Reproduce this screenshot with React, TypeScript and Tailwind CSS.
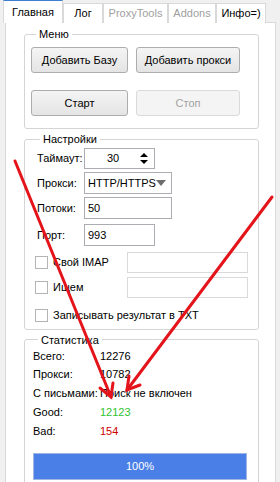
import React from 'react';

const btn =
  'flex items-center justify-center h-[26px] rounded-[3px] border border-[#adadad] bg-gradient-to-b from-[#f4f4f4] to-[#e4e4e4]';
const input = 'h-[22px] border border-[#abadb3] bg-white flex items-center px-[3px]';

function Tab({ label, w, active, disabled }: { label: string; w: number; active?: boolean; disabled?: boolean }) {
  return (
    <div
      style={{ width: w }}
      className={
        active
          ? 'relative z-10 flex h-[23px] items-center justify-center border border-b-0 border-[#d9d9d9] border-t-[#3c7fd1] bg-white'
          : 'flex h-[20px] items-center justify-center border border-b-0 border-[#d9d9d9] bg-white'
      }
    >
      <span className={disabled ? 'text-[#a0a0a0]' : 'text-black'}>{label}</span>
    </div>
  );
}

function Check({ label }: { label: string }) {
  return (
    <div className="flex items-center whitespace-nowrap">
      <div className="h-[13px] w-[13px] border border-[#b4b4b4] bg-white" />
      <span className="ml-[5px]">{label}</span>
    </div>
  );
}

function Stat({ label, value, h, color }: { label: string; value: string; h: number; color?: string }) {
  return (
    <div style={{ height: h }} className="flex items-center whitespace-nowrap">
      <span className="w-[67px]">{label}</span>
      <span className={color}>{value}</span>
    </div>
  );
}

export default function App() {
  return (
    <div className="relative h-[482px] w-[280px] overflow-hidden bg-[#f0f0f0] font-['Liberation_Sans',sans-serif] text-[11px] text-black">
      <div className="flex h-[23px] items-end pl-[3px]">
        <Tab label="Главная" w={60} active />
        <Tab label="Лог" w={40} />
        <Tab label="ProxyTools" w={65} disabled />
        <Tab label="Addons" w={48} disabled />
        <Tab label="Инфо=)" w={50} />
      </div>

      <div className="-mt-px ml-[5px] h-[470px] w-[271px] border border-[#d9d9d9] bg-white pl-[18px] pt-[4px]">
        <fieldset className="w-[235px] rounded-[3px] border border-[#d5d5d5] pb-[12px] pl-[6px]">
          <legend className="ml-[5px] px-[3px] leading-[14px]">Меню</legend>
          <div className="mt-[6px] flex gap-[8px]">
            <div className={btn + ' w-[97px]'}>Добавить Базу</div>
            <div className={btn + ' w-[104px]'}>Добавить прокси</div>
          </div>
          <div className="mt-[17px] flex gap-[8px]">
            <div className={btn + ' w-[97px]'}>Старт</div>
            <div className="flex h-[26px] w-[104px] items-center justify-center rounded-[3px] border border-[#dadada] bg-[#f4f4f4] text-[#a3a3a3]">
              Стоп
            </div>
          </div>
        </fieldset>

        <fieldset className="mt-[3px] w-[235px] rounded-[3px] border border-[#d5d5d5] pb-[5px] pl-[10px]">
          <legend className="ml-[5px] px-[3px] leading-[14px]">Настройки</legend>
          <div className="mt-[2px] flex items-center pl-[2px]">
            <span className="w-[47px]">Таймаут:</span>
            <div className="flex h-[21px] w-[71px] items-center border border-[#abadb3] bg-white">
              <span className="flex-1 pl-[4px] text-center">30</span>
              <svg width="14" height="17" viewBox="0 0 14 17" className="mr-[3px]">
                <path d="M3 7 L7 3 L11 7 Z" fill="#000" />
                <path d="M3 10 L7 14 L11 10 Z" fill="#000" />
              </svg>
            </div>
          </div>
          <div className="mt-[3px] flex items-center pl-[2px]">
            <span className="w-[47px]">Прокси:</span>
            <div className={input + ' w-[88px] justify-between'}>
              <span>HTTP/HTTPS</span>
              <svg width="10" height="6" viewBox="0 0 10 6" className="mr-[2px]">
                <path d="M0 0 L10 0 L5 6 Z" fill="#6d6d6d" />
              </svg>
            </div>
          </div>
          <div className="mt-[3px] flex items-center pl-[2px]">
            <span className="w-[47px]">Потоки:</span>
            <div className={input + ' w-[88px]'}>50</div>
          </div>
          <div className="mt-[5px] flex items-center pl-[2px]">
            <span className="w-[47px]">Порт:</span>
            <div className={input + ' w-[71px]'}>993</div>
          </div>
          <div className="mt-[6px] flex items-center">
            <div className="w-[92px]">
              <Check label="Свой IMAP" />
            </div>
            <div className="h-[21px] w-[121px] border border-[#d9d9d9] bg-white" />
          </div>
          <div className="mt-[4px] flex items-center">
            <div className="w-[92px]">
              <Check label="Ищем" />
            </div>
            <div className="h-[21px] w-[121px] border border-[#d9d9d9] bg-white" />
          </div>
          <div className="mt-[9px]">
            <Check label="Записывать результат в TXT" />
          </div>
        </fieldset>

        <fieldset className="mt-[3px] h-[170px] w-[235px] rounded-[3px] border border-[#d5d5d5] pl-[8px]">
          <legend className="ml-[5px] px-[3px] leading-[14px]">Статистика</legend>
          <div className="mt-[1px]">
            <Stat label="Всего:" value="12276" h={18} />
            <Stat label="Прокси:" value="10782" h={18} />
            <Stat label="С письмами:" value="Поиск не включен" h={20} />
            <Stat label="Good:" value="12123" h={17} color="text-[#2fc42f]" />
            <Stat label="Bad:" value="154" h={22} color="text-[#cc0000]" />
          </div>
          <div className="mt-[10px] flex h-[27px] w-[214px] items-center justify-center border border-[#9fb6e0] bg-[#4a7fe7] text-white">
            100%
          </div>
        </fieldset>
      </div>

      <svg className="pointer-events-none absolute inset-0" width="280" height="482" viewBox="0 0 280 482">
        <g stroke="#e4141b" strokeWidth="3" strokeLinecap="round" fill="none">
          <path d="M15 161 L111 397" />
          <path d="M113 383 L111 397 L100 388" />
          <path d="M272 197 L127 390" />
          <path d="M129 376 L127 390 L140 385" />
        </g>
      </svg>
    </div>
  );
}
